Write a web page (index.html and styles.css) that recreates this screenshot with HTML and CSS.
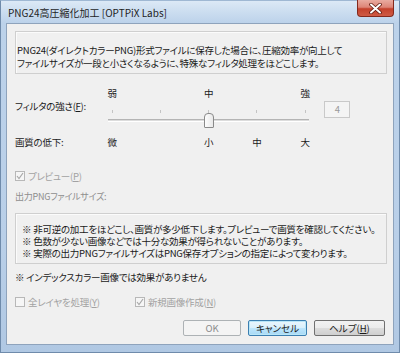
FILE: index.html
```html
<!DOCTYPE html>
<html>
<head>
    <title>PNG24高圧縮化加工</title>
    <link rel="stylesheet" href="styles.css">
</head>
<body>
    <div class="window">
        <div class="titlebar">
            <span class="title">PNG24高圧縮化加工 [OPTPiX Labs]</span>
            <button class="close" aria-label="閉じる">
                <svg width="13" height="11" viewBox="0 0 13 11">
                    <path d="M2 1.5 L11 9.5 M11 1.5 L2 9.5" stroke="#5e1a10" stroke-width="3.6" stroke-linecap="round"/>
                    <path d="M2 1.5 L11 9.5 M11 1.5 L2 9.5" stroke="#fff" stroke-width="2" stroke-linecap="round"/>
                </svg>
            </button>
        </div>

        <div class="client">
            <div class="desc">
                <p>PNG24(ダイレクトカラーPNG)形式ファイルに保存した場合に、圧縮効率が向上して</p>
                <p>ファイルサイズが一段と小さくなるように、特殊なフィルタ処理をほどこします。</p>
            </div>

            <div class="filter">
                <span class="mark c2">弱</span>
                <span class="mark c4">中</span>
                <span class="mark c6">強</span>

                <span class="flabel">フィルタの強さ(<u>F</u>):</span>
                <div class="slider">
                    <div class="ticks"><i></i><i></i><i></i><i></i><i></i></div>
                    <div class="track"></div>
                    <div class="thumb"></div>
                </div>
                <div class="value">4</div>

                <span class="qlabel">画質の低下:</span>
                <span class="mark r3 c2">微</span>
                <span class="mark r3 c4">小</span>
                <span class="mark r3 c5">中</span>
                <span class="mark r3 c6">大</span>
            </div>

            <div class="check preview">
                <span class="box"><svg width="8" height="8" viewBox="0 0 8 8"><path d="M1 4 L3 6.5 L7 1" fill="none" stroke="#a8a8a8" stroke-width="1.2"/></svg></span>
                <span>プレビュー(<u>P</u>)</span>
            </div>
            <div class="outsize">出力PNGファイルサイズ:</div>

            <div class="notes">
                <p>※ 非可逆の加工をほどこし、画質が多少低下します。プレビューで画質を確認してください。</p>
                <p>※ 色数が少ない画像などでは十分な効果が得られないことがあります。</p>
                <p>※ 実際の出力PNGファイルサイズはPNG保存オプションの指定によって変わります。</p>
            </div>

            <div class="index-note">※ インデックスカラー画像では効果がありません</div>

            <div class="options">
                <div class="check layers">
                    <span class="box"></span>
                    <span>全レイヤを処理(<u>Y</u>)</span>
                </div>
                <div class="check">
                    <span class="box"><svg width="8" height="8" viewBox="0 0 8 8"><path d="M1 4 L3 6.5 L7 1" fill="none" stroke="#a8a8a8" stroke-width="1.2"/></svg></span>
                    <span>新規画像作成(<u>N</u>)</span>
                </div>
            </div>

            <div class="buttons">
                <button class="btn ok" disabled>OK</button>
                <button class="btn cancel">キャンセル</button>
                <button class="btn help">ヘルプ(<u>H</u>)</button>
            </div>
        </div>
    </div>
</body>
</html>
```

FILE: styles.css
```css
body { margin: 0; font-family: "Noto Sans CJK JP", sans-serif; font-size: 9.5px; letter-spacing: -0.25px; color: #1a1a1a; font-feature-settings: "palt"; }
p { margin: 0; white-space: nowrap; }
u { text-decoration-thickness: 1px; text-underline-offset: 1px; }

.window { width: 400px; height: 353px; box-sizing: border-box; border: 1px solid #6f8bab; border-top-color: #9fb8d3; padding: 0 5px 7px; display: flex; flex-direction: column;
    background: linear-gradient(180deg, #dce9f6 0, #cadcef 12px, #bcd2ea 22px, #b9cfe8 70%, #b0c8e3 100%); }

.titlebar { height: 22px; display: flex; justify-content: space-between; align-items: center; }
.title { margin-left: 2px; font-size: 10px; letter-spacing: 0; color: #1e1e1e; font-feature-settings: normal; }
.close { align-self: flex-start; width: 37px; height: 17px; padding: 0; margin-top: -1px; border: 1px solid #84291c; border-top: none; border-radius: 0 0 4px 4px; display: flex; align-items: center; justify-content: center;
    background: linear-gradient(180deg, #e9aba0 0, #dd8577 45%, #c4412c 55%, #cf5b45 100%); }

.client { flex: 1; background: #f0f0f0; border: 1px solid #8ea3bc; padding: 7px 6px 0 8px; display: flex; flex-direction: column; }

.desc { height: 43px; box-sizing: border-box; border: 1px solid #cfcfcf; box-shadow: inset 1px 1px 0 #fbfbfb; padding: 12px 0 0 1px; line-height: 13px; }

.filter { margin-top: 12px; display: grid; grid-template-columns: 73px repeat(5, 48.25px) 1fr; grid-template-rows: 14px 31px 22px; }
.mark { grid-row: 1; text-align: center; line-height: 14px; }
.mark.r3 { grid-row: 3; align-self: center; }
.c2 { grid-column: 2; }
.c4 { grid-column: 4; }
.c5 { grid-column: 5; }
.c6 { grid-column: 6; }
.flabel { grid-row: 2; grid-column: 1; white-space: nowrap; line-height: 12px; }
.qlabel { grid-row: 3; grid-column: 1; white-space: nowrap; align-self: center; line-height: 14px; }

.slider { grid-row: 2; grid-column: 2 / 7; position: relative; }
.ticks { display: grid; grid-template-columns: repeat(5, 1fr); margin-top: 10px; }
.ticks i { justify-self: center; width: 1px; height: 3px; background: #c4c4c4; }
.track { margin: 6px 20px 0; height: 1px; border-top: 1px solid #b4b4b4; border-bottom: 1px solid #ffffff; background: #dcdcdc; }
.thumb { position: absolute; left: 116px; top: 13px; width: 8px; height: 13px; border: 1px solid #8a8a8a; border-radius: 4px 4px 1px 1px; background: linear-gradient(90deg, #fdfdfd, #e9e9e9); }

.value { grid-row: 2; grid-column: 7; margin: 1px 0 0 -5px; width: 26px; height: 17px; box-sizing: border-box; border: 1px solid #c9c9c9; background: #f4f4f4; color: #9a9a9a; text-align: center; line-height: 15px; }

.check { display: flex; align-items: center; gap: 3px; color: #a2a2a2; line-height: 12px; white-space: nowrap; }
.box { width: 10px; height: 10px; box-sizing: border-box; border: 1px solid #b8b8b8; background: #f6f6f6; display: flex; align-items: center; justify-content: center; }
.preview { margin-top: 17px; height: 11px; }
.outsize { margin-top: 10px; line-height: 12px; color: #8e8e8e; font-size: 9px; }

.notes { margin-top: 10px; height: 51px; box-sizing: border-box; border: 1px solid #cfcfcf; box-shadow: inset 1px 1px 0 #fbfbfb; padding: 9px 0 0 6px; line-height: 12px; }

.index-note { margin-top: 7px; line-height: 12px; }

.options { margin-top: 13px; display: flex; }
.layers { width: 120px; }

.buttons { margin-top: 12px; margin-right: 2px; display: flex; justify-content: flex-end; gap: 7px; }
.btn { height: 16px; padding: 0; font: inherit; font-size: 9.5px; color: #1a1a1a; border-radius: 2px; border: 1px solid #707070; line-height: 13px;
    background: linear-gradient(180deg, #f2f2f2 0, #ebebeb 50%, #dddddd 50%, #cfcfcf 100%); }
.ok { width: 58px; color: #8a8a8a; border-color: #adb2b5; background: #f4f4f4; }
.cancel { width: 59px; border-color: #3c7fb1; box-shadow: inset 0 0 0 1px #b9e6f8; background: linear-gradient(180deg, #eaf6fd 0, #d9f0fc 50%, #bee6fd 50%, #a7d9f5 100%); }
.help { width: 71px; }
```
